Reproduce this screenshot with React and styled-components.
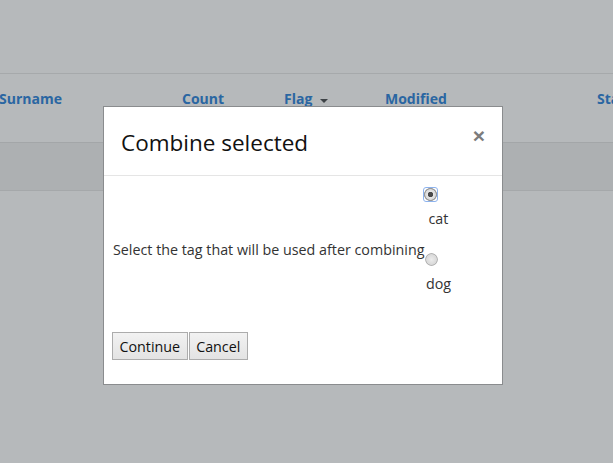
import React from "react";
import styled, { createGlobalStyle } from "styled-components";

const Global = createGlobalStyle`
  html, body { margin: 0; padding: 0; }
  body {
    width: 613px; height: 463px; overflow: hidden;
    background: #b6b9bb;
    font-family: "Open Sans", "Noto Sans", sans-serif;
  }
`;

const Page = styled.div`
  position: relative;
  width: 613px;
  height: 463px;
  overflow: hidden;
  background: #b6b9bb;
`;

const TopSpace = styled.div`
  height: 73px;
  border-bottom: 1px solid #a6a9ab;
`;

const HeaderRow = styled.div`
  display: grid;
  grid-template-columns: 182px 102px 101px 212px 1fr;
  height: 68px;
  align-items: center;
  border-bottom: 1px solid #a3a6a8;
  white-space: nowrap;
  margin-right: -40px;
`;

const HeaderCell = styled.div`
  font-weight: 700;
  font-size: 14px;
  color: #2a66a2;
  padding-bottom: 19px;
  display: flex;
  align-items: center;
  gap: 8px;
  margin-left: ${p => p.$shift || 0}px;
`;

const Caret = styled.span`
  display: inline-block;
  width: 0;
  height: 0;
  border-left: 4px solid transparent;
  border-right: 4px solid transparent;
  border-top: 4px solid #3d4246;
  margin-top: 4px;
`;

const Band = styled.div`
  height: 47px;
  background: #adb0b2;
  border-bottom: 1px solid #a5a8aa;
`;

const Modal = styled.div`
  position: absolute;
  left: 103px;
  top: 106px;
  width: 398px;
  height: 277px;
  background: #fff;
  border: 1px solid #8a8c8e;
  display: flex;
  flex-direction: column;
`;

const ModalHeader = styled.div`
  height: 68px;
  padding: 0 17px;
  display: flex;
  align-items: center;
  justify-content: space-between;
  border-bottom: 1px solid #e5e5e5;
`;

const Title = styled.h4`
  margin: 0;
  font-size: 22.5px;
  font-weight: 400;
  color: #111;
  padding-top: 2px;
`;

const Close = styled.button`
  border: 0;
  background: none;
  padding: 0;
  font-size: 21px;
  font-weight: 700;
  color: #7c7c7c;
  line-height: 1;
  margin-top: -12px;
  margin-right: 0px;
  font-family: "Liberation Sans", Arial, sans-serif;
`;

const ModalBody = styled.div`
  padding: 12px 8px 0 9px;
  display: flex;
  align-items: center;
  font-size: 14.3px;
  color: #333;
`;

const Prompt = styled.span`
  white-space: nowrap;
  padding-top: 17px;
`;

const Options = styled.div`
  display: grid;
  grid-template-columns: 28px;
  justify-items: center;
`;

const Radio = styled.input`
  justify-self: start;
  margin: ${p => (p.$first ? "0" : "24px 0 0 1px")};
  width: 13px;
  height: 13px;
  appearance: none;
  border: 0;
  border-radius: ${p => (p.$first ? "2px" : "50%")};
  background: ${p =>
    p.$first
      ? "radial-gradient(circle closest-side, #4a4a4a 0, #4a4a4a 2.4px, #e6e6e6 3px, #d9d9d9 5px, #9a9a9a 5.6px, #9a9a9a 6.2px, #fff 6.8px)"
      : "radial-gradient(circle closest-side, #ececec 0, #d9d9d9 5px, #b4b4b4 5.6px, #b4b4b4 6.2px, transparent 6.8px)"};
  outline: ${p => (p.$first ? "1px solid #8db3ee" : "none")};
  outline-offset: 0;
`;

const OptLabel = styled.label`
  font-size: 14.3px;
  color: #333;
  line-height: 20px;
  margin-top: 8px;
`;

const Footer = styled.div`
  padding: 0 8px;
  margin-top: 38px;
  display: flex;
`;

const Button = styled.button`
  font-family: "Open Sans", "Noto Sans", sans-serif;
  font-size: 14.3px;
  color: #111;
  height: 28px;
  padding: 0 6.5px;
  border: 1px solid #acacac;
  border-radius: 0;
  background: linear-gradient(#f2f2f2, #e3e3e3);
  margin-right: 1px;
`;

export default function App() {
  return (
    <Page>
      <Global />
      <TopSpace />
      <HeaderRow>
        <HeaderCell $shift={-1}>Surname</HeaderCell>
        <HeaderCell>Count</HeaderCell>
        <HeaderCell>Flag <Caret /></HeaderCell>
        <HeaderCell>Modified</HeaderCell>
        <HeaderCell>Status</HeaderCell>
      </HeaderRow>
      <Band />
      <Modal>
        <ModalHeader>
          <Title>Combine selected</Title>
          <Close>×</Close>
        </ModalHeader>
        <ModalBody>
          <Prompt>Select the tag that will be used after combining</Prompt>
          <Options>
            <Radio type="radio" name="tag" defaultChecked $first />
            <OptLabel>cat</OptLabel>
            <Radio type="radio" name="tag" />
            <OptLabel>dog</OptLabel>
          </Options>
        </ModalBody>
        <Footer>
          <Button>Continue</Button>
          <Button>Cancel</Button>
        </Footer>
      </Modal>
    </Page>
  );
}
